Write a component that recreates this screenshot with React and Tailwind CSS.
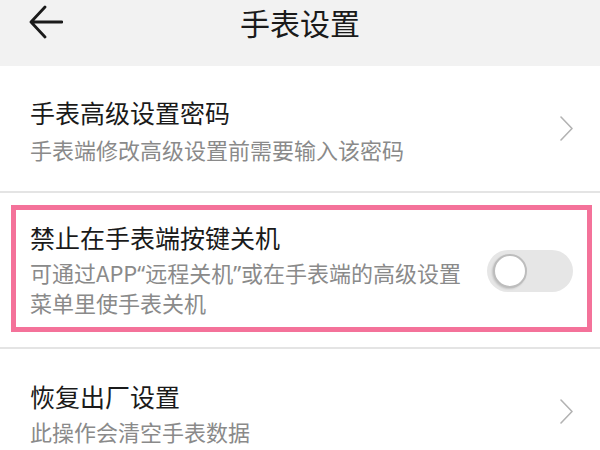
export default function App() {
  return (
    <main className="w-[600px] h-[450px] overflow-hidden bg-white font-['Noto_Sans_CJK_SC','Noto_Sans',sans-serif]">
      <header className="h-[66px] bg-[#f2f2f2]">
        <div className="relative flex h-[44px] items-center justify-center">
          <svg
            className="absolute left-[29px] top-[5px]"
            width="34"
            height="34"
            viewBox="0 0 34 34"
            fill="none"
            stroke="#1a1a1a"
            strokeWidth="2.8"
            strokeLinecap="round"
            strokeLinejoin="round"
          >
            <path d="M33 17H2M16 2L2 17L16 32" />
          </svg>
          <h1 className="text-[30px] leading-[44px] text-[#1a1a1a]">手表设置</h1>
        </div>
      </header>

      <section className="flex h-[125px] items-center pl-[30px] pr-[27px]">
        <div className="flex-1 pt-[1px]">
          <p className="text-[25px] leading-[34px] text-[#1a1a1a]">手表高级设置密码</p>
          <p className="mt-[5px] text-[22px] leading-[30px] text-[#8a8a8a]">手表端修改高级设置前需要输入该密码</p>
        </div>
        <Chevron />
      </section>
      <div className="h-[2px] bg-[#e4e4e4]" />

      <section className="pt-[12px] pb-[15px] pl-[11px] pr-[8px]">
        <div className="flex items-center border-[5px] border-[#f4729a] pt-[10px] pb-[10px] pl-[14px] pr-[14px]">
          <div className="flex-1">
            <p className="text-[25px] leading-[34px] text-[#1a1a1a]">禁止在手表端按键关机</p>
            <p className="mt-[4px] whitespace-nowrap text-[22px] leading-[29px] text-[#8a8a8a]">
              可通过APP<span className="font-['Noto_Sans',sans-serif]">“</span>远程关机<span className="font-['Noto_Sans',sans-serif]">”</span>或在手表端的高级设置
              <br />
              菜单里使手表关机
            </p>
          </div>
          <div className="mt-[4px] flex h-[42px] w-[86px] shrink-0 items-center rounded-full bg-[#e6e6e6] pl-[6px]">
            <div className="h-[34px] w-[34px] rounded-full border-2 border-[#bdbdbd] bg-white shadow-[-1px_1px_2px_rgba(0,0,0,0.15)]" />
          </div>
        </div>
      </section>
      <div className="h-[2px] bg-[#e4e4e4]" />

      <section className="flex h-[125px] items-center pl-[30px] pr-[27px]">
        <div className="flex-1 pt-[1px]">
          <p className="text-[25px] leading-[34px] text-[#1a1a1a]">恢复出厂设置</p>
          <p className="mt-[3px] text-[22px] leading-[30px] text-[#8a8a8a]">此操作会清空手表数据</p>
        </div>
        <Chevron />
      </section>
    </main>
  );
}

function Chevron() {
  return (
    <svg width="13" height="25" viewBox="0 0 13 25" fill="none" stroke="#b3b3b3" strokeWidth="1.6" strokeLinecap="round" strokeLinejoin="round">
      <path d="M1 1L12 12.5L1 24" />
    </svg>
  );
}
